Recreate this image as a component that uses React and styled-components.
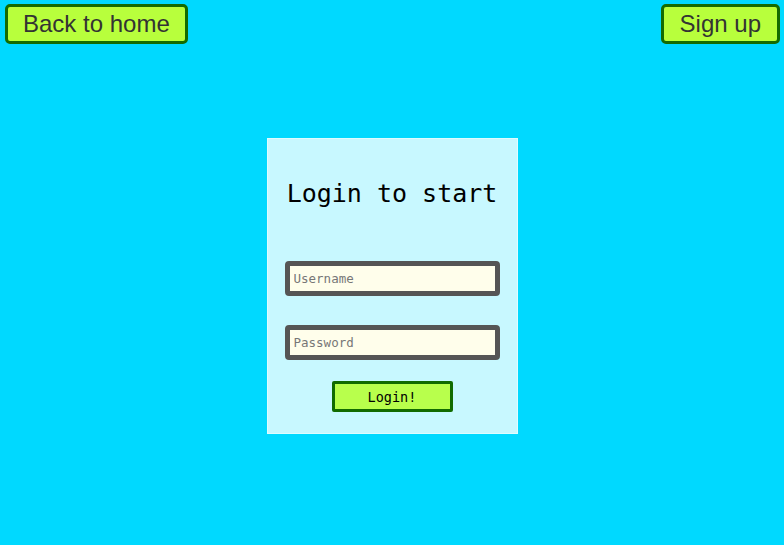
import React from "react";
import styled, { createGlobalStyle } from "styled-components";

const Global = createGlobalStyle`
  html, body { margin: 0; padding: 0; }
  body { background: #00d9ff; min-height: 545px; font-family: "Liberation Sans", Arial, sans-serif; }
`;

const Page = styled.div`
  min-height: 545px;
  display: flex;
  flex-direction: column;
`;

const TopBar = styled.div`
  display: flex;
  justify-content: space-between;
  padding: 4px 4px 0 5px;
`;

const NavButton = styled.button`
  height: 40px;
  padding: 0 ${(p) => p.$px}px;
  background: #b8ff3c;
  border: 3px solid #146b00;
  border-radius: 5px;
  color: #333;
  font-family: "Liberation Sans", Arial, sans-serif;
  font-size: 24px;
  line-height: 1;
  cursor: pointer;
`;

const Center = styled.div`
  display: flex;
  justify-content: center;
  padding-top: 94px;
`;

const Card = styled.form`
  width: 251px;
  box-sizing: border-box;
  background: #c8f8ff;
  border: 1px solid #dffcff;
  padding: 0 18px;
  height: 296px;
  display: flex;
  flex-direction: column;
  align-items: center;
  font-family: "DejaVu Sans Mono", monospace;
`;

const Title = styled.h1`
  margin: 39px 0 0;
  font-size: 25px;
  font-weight: normal;
  color: #000;
  line-height: 32px;
  white-space: nowrap;
`;

const Field = styled.input`
  box-sizing: border-box;
  width: 215px;
  height: 35px;
  margin-top: ${(p) => p.$mt}px;
  border: 5px solid #555;
  border-radius: 4px;
  background: #fffeeb;
  padding: 0 4px;
  font-family: "DejaVu Sans Mono", monospace;
  font-size: 12.5px;
  color: #333;
  outline: none;
  &::placeholder { color: #777; }
`;

const Submit = styled.button`
  margin-top: 21px;
  width: 121px;
  height: 31px;
  box-sizing: border-box;
  background: #b8ff4c;
  border: 3px solid #116b00;
  border-radius: 2px;
  font-family: "DejaVu Sans Mono", monospace;
  font-size: 13.5px;
  color: #000;
  cursor: pointer;
`;

export default function App() {
  return (
    <Page>
      <Global />
      <TopBar>
        <NavButton $px={15}>Back to home</NavButton>
        <NavButton $px={16}>Sign up</NavButton>
      </TopBar>
      <Center>
        <Card onSubmit={(e) => e.preventDefault()}>
          <Title>Login to start</Title>
          <Field $mt={51} placeholder="Username" />
          <Field $mt={29} type="password" placeholder="Password" />
          <Submit type="submit">Login!</Submit>
        </Card>
      </Center>
    </Page>
  );
}
